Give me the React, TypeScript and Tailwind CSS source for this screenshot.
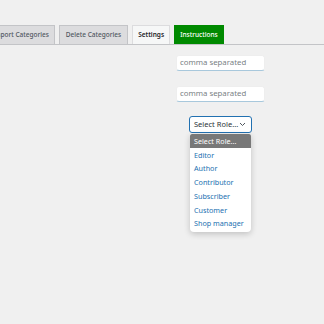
const roles = ['Editor', 'Author', 'Contributor', 'Subscriber', 'Customer', 'Shop manager'];

function Tab({ label, active, green, className }: { label: string; active?: boolean; green?: boolean; className?: string }) {
  let tone = 'bg-[#dcdcde] border-[#c3c4c7] text-[#50575e]';
  if (active) tone = 'bg-[#f6f7f7] border-[#dcdcde] text-[#1d2327]';
  if (green) tone = 'bg-[#008a00] border-[#008a00] text-white';
  return (
    <div className={`h-[19px] flex items-center px-[5px] border border-b-0 text-[6.5px] font-medium whitespace-nowrap shrink-0 ${tone} ${className ?? ''}`}>
      {label}
    </div>
  );
}

export default function App() {
  return (
    <div className="w-[324px] h-[324px] bg-[#f0f0f0] overflow-hidden" style={{ fontFamily: '"Noto Sans", "Open Sans", sans-serif' }}>
      <div className="pt-[25px]">
        <div className="flex gap-[4px] border-b border-[#c3c4c7] overflow-hidden">
          <Tab label="Import Categories" className="ml-[-14px]" />
          <Tab label="Delete Categories" className="px-[6px]" />
          <Tab label="Settings" active className="px-[3px] font-semibold" />
          <Tab label="Instructions" green />
        </div>
      </div>

      <div className="pl-[176px] pt-[10px] flex flex-col items-start">
        <div className="w-[89px] h-[16px] bg-white rounded-[3px] border border-[#eeeeee] border-b-[#a8c8dc] flex items-center px-[3px] text-[7.8px] text-[#7a7f85]">
          comma separated
        </div>
        <div className="mt-[15px] w-[89px] h-[16px] bg-white rounded-[3px] border border-[#eeeeee] border-b-[#a8c8dc] flex items-center px-[3px] text-[7.8px] text-[#7a7f85]">
          comma separated
        </div>

        <div className="relative ml-[13px] mt-[14px]">
          <div className="w-[63px] h-[17px] bg-white rounded-[3px] border border-[#2271b1] flex items-center justify-between pl-[4px] pr-[5px] text-[7.5px] text-[#2c3338]">
            <span>Select Role...</span>
            <svg width="7" height="5" viewBox="0 0 7 5" fill="none">
              <path d="M1 1l2.5 2.5L6 1" stroke="#50575e" strokeWidth="1" />
            </svg>
          </div>
          <div className="absolute left-[1px] top-[18px] w-[61px] bg-white rounded-b-[4px] shadow-[0_2px_6px_rgba(0,0,0,0.2)] pb-[1px] text-[7.2px]">
            <div className="h-[14px] flex items-center px-[4px] bg-[#787878] text-white rounded-t-[2px]">Select Role...</div>
            {roles.map(r => (
              <div key={r} className="h-[13.8px] flex items-center px-[4px] text-[#2271b1]">
                {r}
              </div>
            ))}
          </div>
        </div>
      </div>
    </div>
  );
}
